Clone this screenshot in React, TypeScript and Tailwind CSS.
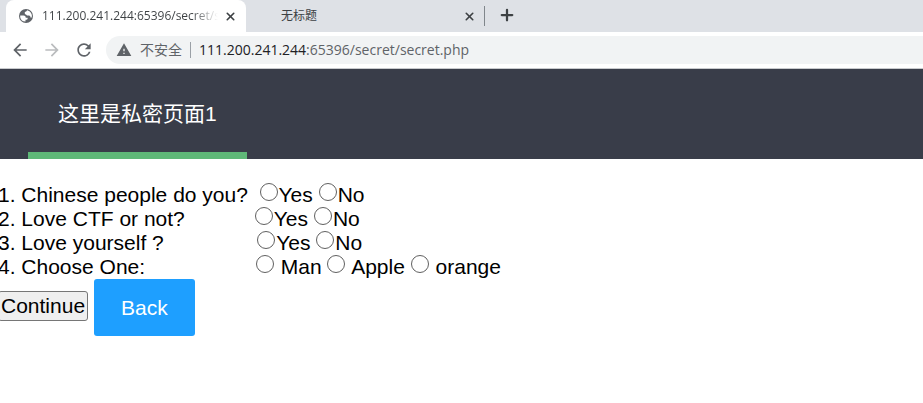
import { X, Plus } from 'lucide-react';
import { MdArrowBack, MdArrowForward, MdRefresh, MdWarning } from 'react-icons/md';

const questions = [
  { text: '1. Chinese people do you?', gap: 2, options: ['Yes', 'No'], spaced: false },
  { text: '2. Love CTF or not?', gap: 12, options: ['Yes', 'No'], spaced: false },
  { text: '3. Love yourself ?', gap: 16, options: ['Yes', 'No'], spaced: false },
  { text: '4. Choose One:', gap: 19, options: ['Man', 'Apple', 'orange'], spaced: true },
];

function Globe() {
  return (
    <svg viewBox="0 0 16 16" className="size-4 shrink-0" aria-hidden="true">
      <circle cx="8" cy="8" r="7" fill="#5f6368" />
      <path
        d="M2.2 7.6 H5.6 Q7.8 7.7 7.8 9.7 H9.6 V11 Q9.4 11.8 8.2 11.8 H7.5 V13.5 Q3 13.4 2.2 9.2 Z M9.2 2.3 Q8.4 3.8 6.8 4.1 V5.6 Q6.8 6.5 8 6.6 L9 7.5 H11 Q12.5 7.5 12.5 9.4 H13.8 Q14.6 4 9.2 2.3 Z"
        fill="#fff"
      />
    </svg>
  );
}

function TabStrip() {
  return (
    <div className="flex h-8 items-end bg-[#dee1e6] pl-1.5 text-xs text-[#3c4043]">
      <div className="flex h-8 w-60 items-center rounded-t-lg bg-white pl-3">
        <Globe />
        <span className="ml-2 w-44 overflow-hidden whitespace-nowrap bg-linear-to-r from-[#3c4043] from-85% to-transparent bg-clip-text text-transparent">
          111.200.241.244:65396/secret/secret.php
        </span>
        <button aria-label="Close tab" className="ml-1.5">
          <X size={13} strokeWidth={3} />
        </button>
      </div>
      <div className="flex h-8 w-60 items-center pl-[35px]">
        <span className="w-44">无标题</span>
        <button aria-label="Close tab" className="ml-1.5">
          <X size={13} strokeWidth={3} />
        </button>
        <span className="ml-2 h-5 w-px bg-[#80868b]" />
      </div>
      <button aria-label="New tab" className="mb-2 ml-3">
        <Plus size={18} strokeWidth={3} />
      </button>
    </div>
  );
}

function Toolbar() {
  return (
    <div className="flex h-[37px] items-center border-b border-[#c8cacd] bg-white pl-2.5 text-[#5f6368]">
      <button aria-label="Back to previous page">
        <MdArrowBack size={20} />
      </button>
      <button aria-label="Forward" className="ml-3 text-[#babcbe]" disabled>
        <MdArrowForward size={20} />
      </button>
      <button aria-label="Reload" className="ml-3">
        <MdRefresh size={20} />
      </button>
      <div className="ml-3 flex h-7 flex-1 items-center rounded-l-full bg-[#f1f3f4] pl-2.5 text-sm">
        <MdWarning size={16} />
        <span className="ml-2">不安全</span>
        <span className="mx-2 h-4 w-px bg-[#9aa0a6]" />
        <span>
          <span className="text-[#202124]">111.200.241.244</span>:65396/secret/secret.php
        </span>
      </div>
    </div>
  );
}

export default function App() {
  return (
    <div className="min-h-screen overflow-hidden bg-white">
      <div className="font-['Open_Sans','Noto_Sans_CJK_SC',sans-serif]">
        <TabStrip />
        <Toolbar />
      </div>
      <div className="font-['Liberation_Sans','Noto_Sans_CJK_SC',sans-serif] text-[21px] leading-6 text-black">
        <nav className="flex bg-[#393d49] pl-7">
          <a
            href="#secret"
            className="flex h-[90px] items-center border-b-[7px] border-[#5fb878] px-[30px] pt-1.5 whitespace-nowrap text-white"
          >
            这里是私密页面1
          </a>
        </nav>
        <form className="mt-6 -ml-0.5" onSubmit={(e) => e.preventDefault()}>
          {questions.map((q) => (
            <div key={q.text} role="radiogroup" aria-label={q.text} className="flex whitespace-pre">
              <span>{q.text + '\u00a0'.repeat(q.gap)}</span>
              {q.options.map((option) => (
                <label key={option} className="flex">
                  <input
                    type="radio"
                    name={q.text}
                    value={option}
                    className="mr-px size-[18px] appearance-none rounded-full border border-[#606060] bg-white checked:bg-[#1e9fff]"
                  />
                  {(q.spaced ? ' ' : '') + option + ' '}
                </label>
              ))}
            </div>
          ))}
          <div className="flex items-center gap-1.5">
            <button
              type="submit"
              className="mb-1 h-[30px] rounded-[3px] border border-[#767676] bg-[#efefef] px-0.5"
            >
              Continue
            </button>
            <button type="button" className="h-[57px] rounded-[3px] bg-[#1e9fff] px-[27px] text-white">
              Back
            </button>
          </div>
        </form>
      </div>
    </div>
  );
}
